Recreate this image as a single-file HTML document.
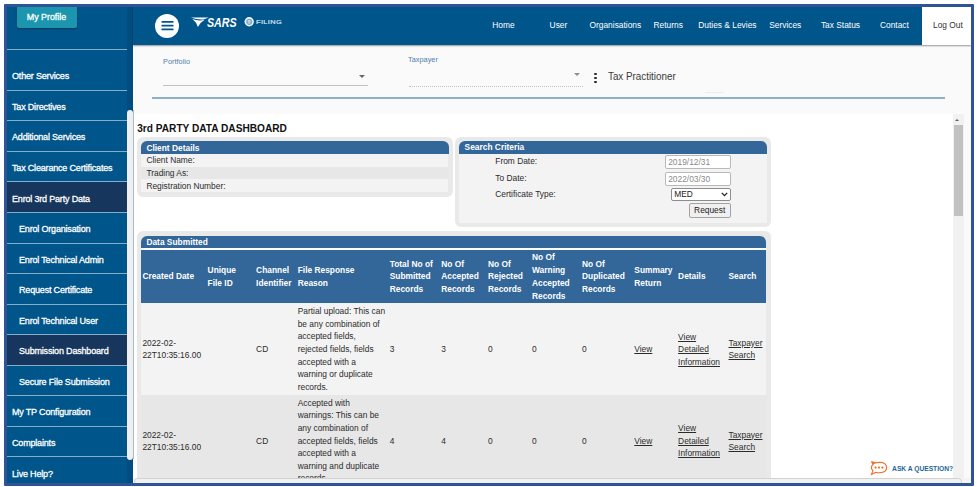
<!DOCTYPE html>
<html><head><meta charset="utf-8"><title>3rd Party Data Dashboard</title>
<style>
*{box-sizing:border-box;margin:0;padding:0}
html,body{width:977px;height:487px;overflow:hidden;background:#fff}
body{font-family:"Liberation Sans",Arial,sans-serif;position:relative;color:#222}
#w{position:absolute;left:0;top:0;width:977px;height:487px;clip-path:inset(7px 6px 4px 7px)}
#w div,#w svg{position:absolute}
#frame{position:absolute;left:4px;top:4px;width:970px;height:482px;border:3px solid #2f5496;border-radius:1px}
#side{left:7px;top:7px;width:126px;height:476px;background:#00558b}
#sstrip{left:127px;top:7px;width:6px;height:476px;background:#014d80}
#sthumb{left:127px;top:109.5px;width:5.7px;height:350px;background:#efefef;border-radius:3px}
#sline{left:133.1px;top:110px;width:1px;height:349px;background:#a8bccd}
.sep{left:7px;width:120px;height:1px;background:#86aecb}
.hl{left:7px;width:120px;background:#17365d}
.mi{left:11.5px;color:#fff;font-size:9.6px;line-height:12px;white-space:nowrap;letter-spacing:-0.2px;-webkit-text-stroke:.3px #fff;transform-origin:0 50%;transform:scaleX(.94)}
.mi.sub{left:19px}
#prof{left:16.5px;top:5px;width:60px;height:23px;background:#1b96ae;border-radius:2px;box-shadow:0 1px 2px rgba(0,0,0,.35);color:#fff;font-size:8.9px;-webkit-text-stroke:.3px #fff;text-align:center;line-height:24.6px}
#hdr{left:133px;top:7px;width:838px;height:38px;background:#00558b;box-shadow:0 1px 1.5px rgba(0,0,0,.4)}
.nav{top:20px;color:#fff;font-size:8.4px;line-height:11px;white-space:nowrap}
#logout{left:922px;top:7px;width:49px;height:38px;background:#fff}
#main{left:133px;top:45px;width:838px;height:438px;background:#fafafa}
.t{font-size:8.4px;line-height:12.6px;color:#2b2b2b;white-space:nowrap}
.b{font-weight:bold}
.wh{color:#fff}
.pan{background:#e9e9e9;border-radius:6px}
.ph{background:#336699;border-radius:6px 6px 0 0}
.r1{background:#f3f3f3}
.r2{background:#e7e7e7}
.u{text-decoration:underline}
.inp{background:#fff;border:1px solid #b8b8b8;border-radius:2px;font-size:8.4px;line-height:12px;color:#8a8a8a;padding-left:2.5px;white-space:nowrap}
</style></head><body>
<div id="w">
<div id="main"></div>
<div style="left:162.6px;top:56.6px;font-size:8.1px;line-height:10px;color:#4f7fad;transform-origin:0 50%;transform:scaleX(.91)">Portfolio</div>
<div style="left:163px;top:85.3px;width:205px;height:1px;background:#c2c2c2"></div>
<div style="left:358.5px;top:75.2px;width:0;height:0;border-left:3px solid transparent;border-right:3px solid transparent;border-top:3px solid #666"></div>
<div style="left:408.4px;top:54.9px;font-size:8.1px;line-height:10px;color:#4f7fad;transform-origin:0 50%;transform:scaleX(.91)">Taxpayer</div>
<div style="left:409px;top:85.8px;width:174px;height:0;border-top:1px dotted #c4c4c4"></div>
<div style="left:573.8px;top:73.2px;width:0;height:0;border-left:3px solid transparent;border-right:3px solid transparent;border-top:3px solid #8e8e8e"></div>
<div style="left:594.3px;top:72.9px;width:2.3px;height:2.3px;background:#2a2a2a;border-radius:50%"></div>
<div style="left:594.3px;top:76.7px;width:2.3px;height:2.3px;background:#2a2a2a;border-radius:50%"></div>
<div style="left:594.3px;top:80.5px;width:2.3px;height:2.3px;background:#2a2a2a;border-radius:50%"></div>
<div id="taxp" style="left:608.4px;top:70px;font-size:10.4px;line-height:13px;color:#3a3a3a;white-space:nowrap;transform-origin:0 50%;transform:scaleX(.945)">Tax Practitioner</div>
<div style="left:705px;top:91.5px;width:19px;height:1px;background:#ececec"></div>
<div style="left:152px;top:97.3px;width:792.5px;height:1.4px;background:#8db1ca"></div>
<div id="ifr" style="left:133px;top:114.1px;width:830.7px;height:369px;background:#fff"></div>
<div id="title" class="b" style="left:137.2px;top:121.5px;font-size:10.15px;line-height:13px;color:#111;white-space:nowrap">3rd PARTY DATA DASHBOARD</div>
<div class="pan" style="left:136.6px;top:136.6px;width:316.2px;height:60px"></div>
<div class="ph" style="left:141.2px;top:141.4px;width:307.8px;height:12.8px"></div>
<div class="t b wh" style="left:146.4px;top:141.5px">Client Details</div>
<div class="r1" style="left:141.2px;top:154.2px;width:307.3px;height:12.4px"></div>
<div class="t" style="left:146.4px;top:154.1px">Client Name:</div>
<div class="r2" style="left:141.2px;top:166.6px;width:307.3px;height:12.7px"></div>
<div class="t" style="left:146.4px;top:166.6px">Trading As:</div>
<div class="r1" style="left:141.2px;top:179.3px;width:307.3px;height:13.1px"></div>
<div class="t" style="left:146.4px;top:179.6px">Registration Number:</div>
<div class="pan" style="left:455.1px;top:136.8px;width:315.7px;height:90.3px"></div>
<div class="ph" style="left:459.2px;top:141.3px;width:307.8px;height:12.8px"></div>
<div class="t b wh" style="left:464.6px;top:141.4px">Search Criteria</div>
<div class="r1" style="left:459.2px;top:154px;width:307.8px;height:68.5px"></div>
<div class="t" style="left:495.3px;top:155.3px">From Date:</div>
<div class="t" style="left:495.3px;top:171.9px">To Date:</div>
<div class="t" style="left:495.3px;top:188.4px">Certificate Type:</div>
<div class="inp" style="left:664.7px;top:155.1px;width:66px;height:14px">2019/12/31</div>
<div class="inp" style="left:664.7px;top:171.8px;width:66px;height:14px">2022/03/30</div>
<div class="inp" style="left:670.8px;top:188.3px;width:60px;height:12.8px;color:#222;border-color:#8c8c8c;line-height:10.8px;padding-left:2.5px">MED</div>
<svg style="left:721px;top:192.4px" width="7" height="5" viewBox="0 0 7 5"><path d="M.8 .9 L3.5 3.6 L6.2 .9" fill="none" stroke="#222" stroke-width="1.3"/></svg>
<div class="inp" style="left:688.6px;top:203.4px;width:42.2px;height:14.2px;background:#f0f0f0;border-color:#a3a3a3;color:#222;padding:0;text-align:center;line-height:12.2px">Request</div>
<div class="pan" style="left:137.2px;top:231.4px;width:633.8px;height:270px"></div>
<div class="ph" style="left:141.2px;top:235.6px;width:625.2px;height:12.7px"></div>
<div class="t b wh" style="left:146.4px;top:235.8px">Data Submitted</div>
<div style="left:141.2px;top:248.3px;width:625.2px;height:2px;background:#fff"></div>
<div style="left:141.2px;top:250.2px;width:625.2px;height:52.6px;background:#336699"></div>
<div class="t b wh" style="left:142.4px;top:270.4px;line-height:12.8px">Created Date</div>
<div class="t b wh" style="left:207.6px;top:264.0px;line-height:12.8px">Unique<br>File ID</div>
<div class="t b wh" style="left:256.1px;top:264.0px;line-height:12.8px">Channel<br>Identifier</div>
<div class="t b wh" style="left:297.7px;top:264.0px;line-height:12.8px">File Response<br>Reason</div>
<div class="t b wh" style="left:389.7px;top:257.6px;line-height:12.8px">Total No of<br>Submitted<br>Records</div>
<div class="t b wh" style="left:441.2px;top:257.6px;line-height:12.8px">No Of<br>Accepted<br>Records</div>
<div class="t b wh" style="left:488.0px;top:257.6px;line-height:12.8px">No Of<br>Rejected<br>Records</div>
<div class="t b wh" style="left:532.0px;top:251.2px;line-height:12.8px">No Of<br>Warning<br>Accepted<br>Records</div>
<div class="t b wh" style="left:582.0px;top:257.6px;line-height:12.8px">No Of<br>Duplicated<br>Records</div>
<div class="t b wh" style="left:634.3px;top:264.0px;line-height:12.8px">Summary<br>Return</div>
<div class="t b wh" style="left:678.1px;top:270.4px;line-height:12.8px">Details</div>
<div class="t b wh" style="left:728.5px;top:270.4px;line-height:12.8px">Search</div>
<div class="r1" style="left:141.2px;top:302.8px;width:625.2px;height:91.9px"></div>
<div class="t " style="left:142.4px;top:336.8px;line-height:12.6px">2022-02-<br>22T10:35:16.00</div>
<div class="t " style="left:256.1px;top:343.1px;line-height:12.6px">CD</div>
<div class="t " style="left:297.7px;top:305.2px;line-height:12.6px">Partial upload: This can<br>be any combination of<br>accepted fields,<br>rejected fields, fields<br>accepted with a<br>warning or duplicate<br>records.</div>
<div class="t " style="left:389.7px;top:343.1px;line-height:12.6px">3</div>
<div class="t " style="left:441.2px;top:343.1px;line-height:12.6px">3</div>
<div class="t " style="left:488.0px;top:343.1px;line-height:12.6px">0</div>
<div class="t " style="left:532.0px;top:343.1px;line-height:12.6px">0</div>
<div class="t " style="left:582.0px;top:343.1px;line-height:12.6px">0</div>
<div class="t  u" style="left:634.3px;top:343.1px;line-height:12.6px">View</div>
<div class="t  u" style="left:678.1px;top:330.5px;line-height:12.6px">View<br>Detailed<br>Information</div>
<div class="t  u" style="left:728.5px;top:336.8px;line-height:12.6px">Taxpayer<br>Search</div>
<div class="r2" style="left:141.2px;top:394.7px;width:625.2px;height:92.5px"></div>
<div class="t " style="left:142.4px;top:428.5px;line-height:12.6px">2022-02-<br>22T10:35:16.00</div>
<div class="t " style="left:256.1px;top:434.8px;line-height:12.6px">CD</div>
<div class="t " style="left:297.7px;top:396.9px;line-height:12.6px">Accepted with<br>warnings: This can be<br>any combination of<br>accepted fields, fields<br>accepted with a<br>warning and duplicate<br>records.</div>
<div class="t " style="left:389.7px;top:434.8px;line-height:12.6px">4</div>
<div class="t " style="left:441.2px;top:434.8px;line-height:12.6px">4</div>
<div class="t " style="left:488.0px;top:434.8px;line-height:12.6px">0</div>
<div class="t " style="left:532.0px;top:434.8px;line-height:12.6px">0</div>
<div class="t " style="left:582.0px;top:434.8px;line-height:12.6px">0</div>
<div class="t  u" style="left:634.3px;top:434.8px;line-height:12.6px">View</div>
<div class="t  u" style="left:678.1px;top:422.2px;line-height:12.6px">View<br>Detailed<br>Information</div>
<div class="t  u" style="left:728.5px;top:428.5px;line-height:12.6px">Taxpayer<br>Search</div>
<div style="left:953px;top:114px;width:10.7px;height:364.5px;background:#f1f1f1"></div>
<div style="left:954.2px;top:125.3px;width:8.6px;height:91px;background:#c1c1c1"></div>
<div style="left:955.4px;top:119.2px;width:0;height:0;border-left:2.9px solid transparent;border-right:2.9px solid transparent;border-bottom:2.9px solid #606060"></div>
<div style="left:133px;top:478.4px;width:838px;height:5px;background:#f4f4f4"></div>
<div style="left:134px;top:478.4px;width:828px;height:7px;background:#f1f1f1;border:1px solid #d2d2d2;border-radius:4px"></div>
<svg style="left:868px;top:459px" width="22" height="18" viewBox="868 459 22 18"><path d="M873.2 464.2 L871.6 461.8 L875.6 462.9 Q877.8 462.2 880 462.2 Q886.6 462.6 886.6 467.6 Q886.6 472.6 879.6 472.8 Q877.6 472.8 875.8 472.2 L871.4 474.4 L873 470.6 Q871.4 469.2 871.4 467.4 Q871.4 465.6 873.2 464.2 Z" fill="#fff" stroke="#f26a21" stroke-width="1.1" stroke-linejoin="round"/><circle cx="875.6" cy="467.6" r="1.1" fill="#f26a21"/><circle cx="879" cy="467.6" r="1.1" fill="#f26a21"/><circle cx="882.4" cy="467.6" r="1.1" fill="#f26a21"/><path d="M871.4 461.6 L875.8 462.8 L873.2 464.4 Z" fill="#f26a21"/></svg>
<div id="ask" class="b" style="left:892.1px;top:463.7px;font-size:6.68px;line-height:9px;color:#1c6699;white-space:nowrap">ASK A QUESTION?</div>
<div id="side"></div>
<div id="prof">My Profile</div>
<div class="sep" style="top:49.2px"></div>
<div class="mi" style="top:70.3px">Other Services</div>
<div class="sep" style="top:89.8px"></div>
<div class="mi" style="top:100.8px">Tax Directives</div>
<div class="sep" style="top:120.3px"></div>
<div class="mi" style="top:131.4px">Additional Services</div>
<div class="sep" style="top:150.9px"></div>
<div class="mi" style="top:161.9px">Tax Clearance Certificates</div>
<div class="sep" style="top:181.4px"></div>
<div class="hl" style="top:181.9px;height:30.6px"></div>
<div class="mi" style="top:192.5px">Enrol 3rd Party Data</div>
<div class="sep" style="top:212.0px"></div>
<div class="mi sub" style="top:223.1px">Enrol Organisation</div>
<div class="sep" style="top:242.6px"></div>
<div class="mi sub" style="top:253.6px">Enrol Technical Admin</div>
<div class="sep" style="top:273.1px"></div>
<div class="mi sub" style="top:284.1px">Request Certificate</div>
<div class="sep" style="top:303.6px"></div>
<div class="mi sub" style="top:314.7px">Enrol Technical User</div>
<div class="sep" style="top:334.2px"></div>
<div class="hl" style="top:334.7px;height:30.6px"></div>
<div class="mi sub" style="top:345.2px">Submission Dashboard</div>
<div class="sep" style="top:364.8px"></div>
<div class="mi sub" style="top:375.8px">Secure File Submission</div>
<div class="sep" style="top:395.3px"></div>
<div class="mi" style="top:406.4px">My TP Configuration</div>
<div class="sep" style="top:425.9px"></div>
<div class="mi" style="top:436.9px">Complaints</div>
<div class="sep" style="top:456.4px"></div>
<div class="mi" style="top:467.5px">Live Help?</div>
<div id="sstrip"></div>
<div id="sthumb"></div>
<div id="sline"></div>
<div id="hdr"></div>
<div id="burger" style="left:155px;top:13.5px;width:24px;height:24px;border-radius:50%;background:#fff"></div>
<svg style="left:155px;top:13px" width="24" height="25" viewBox="155 13 24 25"><path d="M162.2 21.8h10.6M162.2 25.65h10.6M162.2 29.45h10.6" stroke="#00558b" stroke-width="1.7" stroke-linecap="round"/></svg>
<svg style="left:185px;top:10.3px" width="30" height="26" viewBox="185 10 30 26"><path d="M190.8 17.6 L208.8 17.5 L203.4 19.5 Q197 19.9 190.8 17.6 Z M192.4 19.1 Q198 21.3 204.6 19.8 Q199.8 22.8 197.9 27 Q196.3 22.2 192.4 19.1 Z" fill="#fff"/></svg>
<div id="sars" style="left:206.6px;top:14.9px;color:#fff;font-size:13.2px;line-height:16px;font-weight:bold;font-style:italic;transform-origin:0 50%;transform:scaleX(.81)">SARS</div>
<svg style="left:243px;top:16px" width="12" height="12" viewBox="0 0 12 12"><circle cx="6.2" cy="5.8" r="3.9" fill="#7fa6c6" stroke="#f0f5f9" stroke-width="1.6"/><path d="M4.6 5.8h3.2M4.8 4.6h2.6M4.8 7h2.6" stroke="#dfe9f2" stroke-width=".8"/></svg>
<div id="filing" style="left:255.9px;top:18.1px;color:#d3e0ec;font-size:5.7px;line-height:8px;letter-spacing:.3px;-webkit-text-stroke:.2px #d3e0ec;transform-origin:0 50%;transform:scaleX(1.3)">FILING</div>
<div class="nav" style="left:492.3px">Home</div>
<div class="nav" style="left:549.6px">User</div>
<div class="nav" style="left:589.5px">Organisations</div>
<div class="nav" style="left:653.5px">Returns</div>
<div class="nav" style="left:698.3px">Duties &amp; Levies</div>
<div class="nav" style="left:769.2px">Services</div>
<div class="nav" style="left:820.9px">Tax Status</div>
<div class="nav" style="left:880.0px">Contact</div>
<div id="logout"></div>
<div class="nav" style="left:933px;color:#333">Log Out</div>
</div>
<div id="frame"></div>
</body></html>
